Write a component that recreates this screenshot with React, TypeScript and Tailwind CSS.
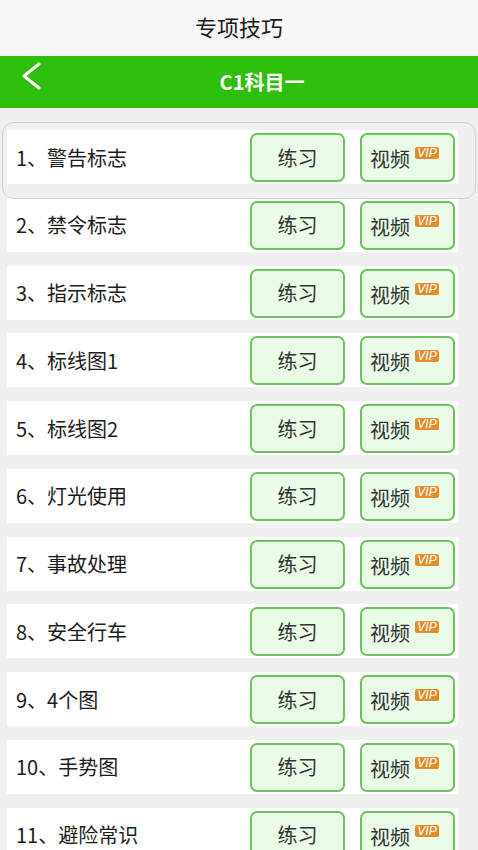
const ITEMS = [
  '1、警告标志',
  '2、禁令标志',
  '3、指示标志',
  '4、标线图1',
  '5、标线图2',
  '6、灯光使用',
  '7、事故处理',
  '8、安全行车',
  '9、4个图',
  '10、手势图',
  '11、避险常识',
]

function Row({ label }: { label: string }) {
  return (
    <div className="mx-[7px] mr-[20px] flex h-[54px] items-start bg-white pr-[3px] pt-[3px]">
      <div className="flex h-[49px] flex-1 items-center pl-[9px] text-[20px] text-[#1c1c1c]">{label}</div>
      <button
        type="button"
        className="flex h-[49px] w-[95px] items-center justify-center rounded-[7px] border-2 border-[#6cc25c] bg-[#eafbe8] text-[20px] text-[#333]"
      >
        练习
      </button>
      <button
        type="button"
        className="ml-[15px] flex h-[49px] w-[95px] items-start rounded-[7px] border-2 border-[#6cc25c] bg-[#eafbe8] pl-[8px] pt-[9px] text-[#333]"
      >
        <span className="text-[20px] leading-[30px]">视频</span>
        <span
          className="ml-[5px] mt-[3px] flex h-[12px] w-[24px] items-center justify-center rounded-[2px] bg-[#e28d2c] text-[12px] italic leading-none text-white"
          style={{ fontFamily: '"Liberation Sans", sans-serif' }}
        >
          VIP
        </span>
      </button>
    </div>
  )
}

export default function App() {
  return (
    <div
      className="relative h-[850px] w-[478px] overflow-hidden bg-[#f0f0f0]"
      style={{ fontFamily: '"Noto Sans CJK SC", "Noto Sans", sans-serif' }}
    >
      <div className="flex h-[56px] items-center justify-center bg-[#f7f7f7] pb-[3px] text-[22px] text-[#1a1a1a]">
        专项技巧
      </div>
      <div className="relative flex h-[52px] items-center justify-center bg-[#2ebe0c] pl-[46px]">
        <svg className="absolute left-[19px] top-[5px]" width="24" height="32" viewBox="0 0 24 32" fill="none">
          <path d="M20 3 L5 15 L20 27" stroke="white" strokeWidth="3.2" strokeLinecap="round" strokeLinejoin="round" />
        </svg>
        <span className="text-[20px] font-bold text-white">C1科目一</span>
      </div>
      <div className="flex flex-col gap-[13.75px] pt-[22px]">
        {ITEMS.map((label) => (
          <Row key={label} label={label} />
        ))}
      </div>
      <div className="pointer-events-none absolute left-[2px] top-[122px] h-[77px] w-[474px] rounded-[12px] border border-[#cfcfcf]" />
    </div>
  )
}
